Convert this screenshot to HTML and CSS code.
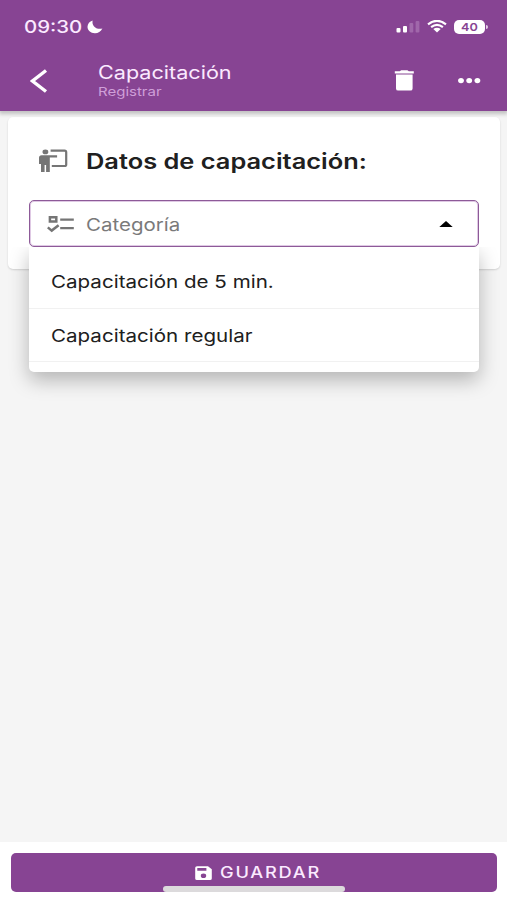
FILE: index.html
```html
<!DOCTYPE html>
<html lang="es">
<head>
  <meta charset="UTF-8">
  <meta name="viewport" content="width=device-width, initial-scale=1.0">
  <title>Capacitación</title>
  <link rel="stylesheet" href="styles.css">
</head>
<body>
  <!-- Header -->
  <header class="header">
    <div class="status-bar">
      <span class="time">09:30</span>
      <svg class="moon" viewBox="0 0 16 14" width="16" height="14">
        <path d="M5.6 0.5C4.7 5.6 8.2 9.8 15.4 8.6C13.8 12 10.9 13.4 7.8 13.3C3.6 13.2 0.4 10.4 0.5 6.8C0.6 3.8 2.6 1.4 5.6 0.5Z" fill="#fff"/>
      </svg>
      <svg class="signal" viewBox="0 0 24 13" width="24" height="13">
        <rect x="0.5" y="8" width="4" height="4.5" rx="1" fill="#fff"/>
        <rect x="7" y="6" width="4" height="6.5" rx="1" fill="#fff"/>
        <rect x="13.5" y="3" width="3.8" height="9.5" rx="1" fill="#a067aa"/>
        <rect x="19.6" y="1" width="3.8" height="11.5" rx="1" fill="#a067aa"/>
      </svg>
      <svg class="wifi" viewBox="0 0 20 13" width="20" height="13">
        <path d="M1 4.4Q10 -2.8 19 4.4M4.1 7.2Q10 2.6 15.9 7.2" fill="none" stroke="#fff" stroke-width="2.1"/>
        <path d="M6.3 9.1Q10 6.5 13.7 9.1L10 12.4Z" fill="#fff"/>
      </svg>
      <span class="battery"><span class="battery-level">40</span></span>
    </div>
    <div class="toolbar">
      <svg class="back" viewBox="0 0 18 24" width="18" height="24">
        <path d="M16 1.5L2.5 12L16 22.5" fill="none" stroke="#fff" stroke-width="3.4"/>
      </svg>
      <div class="heading">
        <h1>Capacitación</h1>
        <p>Registrar</p>
      </div>
      <svg class="trash" viewBox="0 0 20 21" width="20" height="21">
        <path d="M0.8 1.2H5.8L7.2 0.2H13.4L14.8 1.2H19.8V3.4H0.8ZM2 4.6H18.6V18.4Q18.6 20.6 16.4 20.6H4.2Q2 20.6 2 18.4Z" fill="#fff"/>
      </svg>
      <svg class="more" viewBox="0 0 24 6" width="24" height="6">
        <ellipse cx="4" cy="2.6" rx="2.9" ry="2.6" fill="#fff"/>
        <ellipse cx="12.2" cy="2.6" rx="2.9" ry="2.6" fill="#fff"/>
        <ellipse cx="20.4" cy="2.6" rx="2.9" ry="2.6" fill="#fff"/>
      </svg>
    </div>
  </header>

  <!-- Form -->
  <main class="content">
    <section class="card">
      <div class="card-title">
        <svg viewBox="0 0 30 24" width="30" height="24">
          <ellipse cx="6.4" cy="2.9" rx="2.9" ry="2.4" fill="#757575"/>
          <path d="M2.6 6.2H18.1V8.4H10.8V23H7.1V16H5.6V23H2V15H0V8.8Q0 6.2 2.6 6.2Z" fill="#757575"/>
          <path d="M11.6 1.6H25.6Q27.2 1.6 27.2 3.2V15.4Q27.2 17 25.6 17H12.8" fill="none" stroke="#757575" stroke-width="2.2"/>
        </svg>
        <h2>Datos de capacitación:</h2>
      </div>
      <div class="select">
        <svg viewBox="0 0 28 18" width="28" height="18">
          <path d="M2.9 2.2H9.3V6.6H2.9Z" fill="none" stroke="#757575" stroke-width="2.5"/>
          <path d="M0.8 12.4L4.7 15.6L11.6 10.2" fill="none" stroke="#757575" stroke-width="2.5"/>
          <path d="M13.2 4.6H26.8M13.2 13.1H26.8" stroke="#757575" stroke-width="2.2"/>
        </svg>
        <span class="placeholder">Categoría</span>
        <svg class="arrow" viewBox="0 0 14 6" width="14" height="6">
          <path d="M0.3 6L7 0L13.7 6Z" fill="#000"/>
        </svg>
        <ul class="dropdown">
          <li><span>Capacitación de 5 min.</span></li>
          <li><span>Capacitación regular</span></li>
        </ul>
      </div>
    </section>
  </main>

  <!-- Footer -->
  <footer class="footer">
    <button class="save">
      <svg viewBox="0 0 17 14" width="17" height="14">
        <path fill-rule="evenodd" d="M2 0.2H13L16.8 3.2V12.4Q16.8 13.9 15 13.9H2Q0.2 13.9 0.2 12.4V1.7Q0.2 0.2 2 0.2ZM2.3 2V4.8H11.4V2ZM8.5 7.4A2.7 2.3 0 1 0 8.5 12A2.7 2.3 0 1 0 8.5 7.4Z" fill="#fff"/>
      </svg>
      <span>GUARDAR</span>
    </button>
    <div class="home-indicator"></div>
  </footer>
</body>
</html>
```
FILE: styles.css
```css
/* General Styles */
* {
  box-sizing: border-box;
}

body {
  font-family: 'Inter', 'Liberation Sans', sans-serif;
  margin: 0;
  height: 900px;
  display: flex;
  flex-direction: column;
  background: #f5f5f5;
  color: #202020;
  overflow: hidden;
}

h1, h2, p, ul {
  margin: 0;
  padding: 0;
}

svg {
  display: block;
  flex: none;
}

/* Wide lettering */
.time, h1, p, h2, .placeholder, .dropdown span, .save span {
  display: block;
  width: max-content;
  white-space: nowrap;
  transform: scaleX(1.2);
  transform-origin: left center;
}

/* Header */
.header {
  height: 111px;
  flex: none;
  background: #874493;
  color: #fbeaff;
  box-shadow: 0 2px 4px 1px rgba(0, 0, 0, 0.22);
  z-index: 1;
}

.status-bar {
  display: flex;
  align-items: center;
  height: 53px;
  padding: 0 19px 0 24px;
}

.time {
  width: 63px;
  font-size: 17px;
  font-weight: 500;
}

.signal {
  margin-left: auto;
}

.wifi {
  margin-left: 7px;
}

.battery {
  position: relative;
  width: 31px;
  height: 14px;
  margin: 0 3px 0 7px;
  border-radius: 5px;
  background: #fff;
  color: #874493;
  font-size: 11px;
  font-weight: 600;
  line-height: 14px;
  text-align: center;
}

.battery-level {
  display: block;
  transform: scaleX(1.15);
}

.battery::after {
  content: '';
  position: absolute;
  right: -3px;
  top: 5px;
  width: 2px;
  height: 4px;
  border-radius: 0 2px 2px 0;
  background: #e5cfe9;
}

.toolbar {
  display: flex;
  align-items: center;
  height: 55px;
  padding: 0 26px 0 30px;
}

.heading {
  margin: 0 auto 0 50px;
}

h1 {
  font-size: 18px;
  font-weight: 400;
  line-height: 22px;
}

p {
  font-size: 12px;
  line-height: 15px;
  color: #cf9fd8;
  transform: scaleX(1.25);
}

.more {
  margin-left: 43px;
}

/* Card */
.content {
  flex: 1;
  padding: 6px 7px 0 8px;
}

.card {
  height: 152px;
  padding: 32px 21px 0;
  border-radius: 5px;
  background: #fff;
  box-shadow: 0 1px 2px rgba(0, 0, 0, 0.15);
}

.card-title {
  display: flex;
  align-items: center;
  height: 24px;
  padding-left: 10px;
}

h2 {
  margin-left: 17px;
  font-size: 21px;
  font-weight: 600;
  transform: scaleX(1.21);
}

/* Select */
.select {
  position: relative;
  display: flex;
  align-items: center;
  height: 47px;
  margin-top: 27px;
  padding: 0 25px 0 17px;
  border: 1px solid #8d5a98;
  border-radius: 5px;
  box-shadow: inset 0 0 0 1px #dfc9e4;
}

.placeholder {
  margin-left: 11px;
  padding-top: 1px;
  font-size: 17.5px;
  color: #7a7a7a;
  transform: scaleX(1.17);
}

.arrow {
  margin-left: auto;
}

.dropdown {
  position: absolute;
  top: 46px;
  left: -1px;
  right: -1px;
  height: 125px;
  padding-top: 8px;
  border-radius: 0 0 5px 5px;
  background: #fff;
  box-shadow: 0 8px 20px rgba(0, 0, 0, 0.27);
  clip-path: inset(0 -40px -40px -40px);
  list-style: none;
}

.dropdown li {
  height: 53.5px;
  padding: 1px 0 0 22px;
  border-bottom: 1px solid #f1f1f1;
  font-size: 17.5px;
  line-height: 52px;
}

.dropdown span {
  transform: scaleX(1.175);
}

/* Footer */
.footer {
  position: relative;
  height: 58px;
  padding: 11px 10px 0 11px;
  background: #fff;
}

.save {
  display: flex;
  align-items: center;
  width: 100%;
  height: 39px;
  padding: 0 0 0 184px;
  border: none;
  border-radius: 5px;
  background: #874493;
  color: #fbeaff;
  font-family: inherit;
  font-size: 15.5px;
  font-weight: 500;
}

.save span {
  margin-left: 8px;
  letter-spacing: 1.5px;
  transform: scaleX(1.175);
}

.home-indicator {
  position: absolute;
  left: 163px;
  top: 44px;
  width: 182px;
  height: 6px;
  border-radius: 3px;
  background: #dcdadc;
}
```
